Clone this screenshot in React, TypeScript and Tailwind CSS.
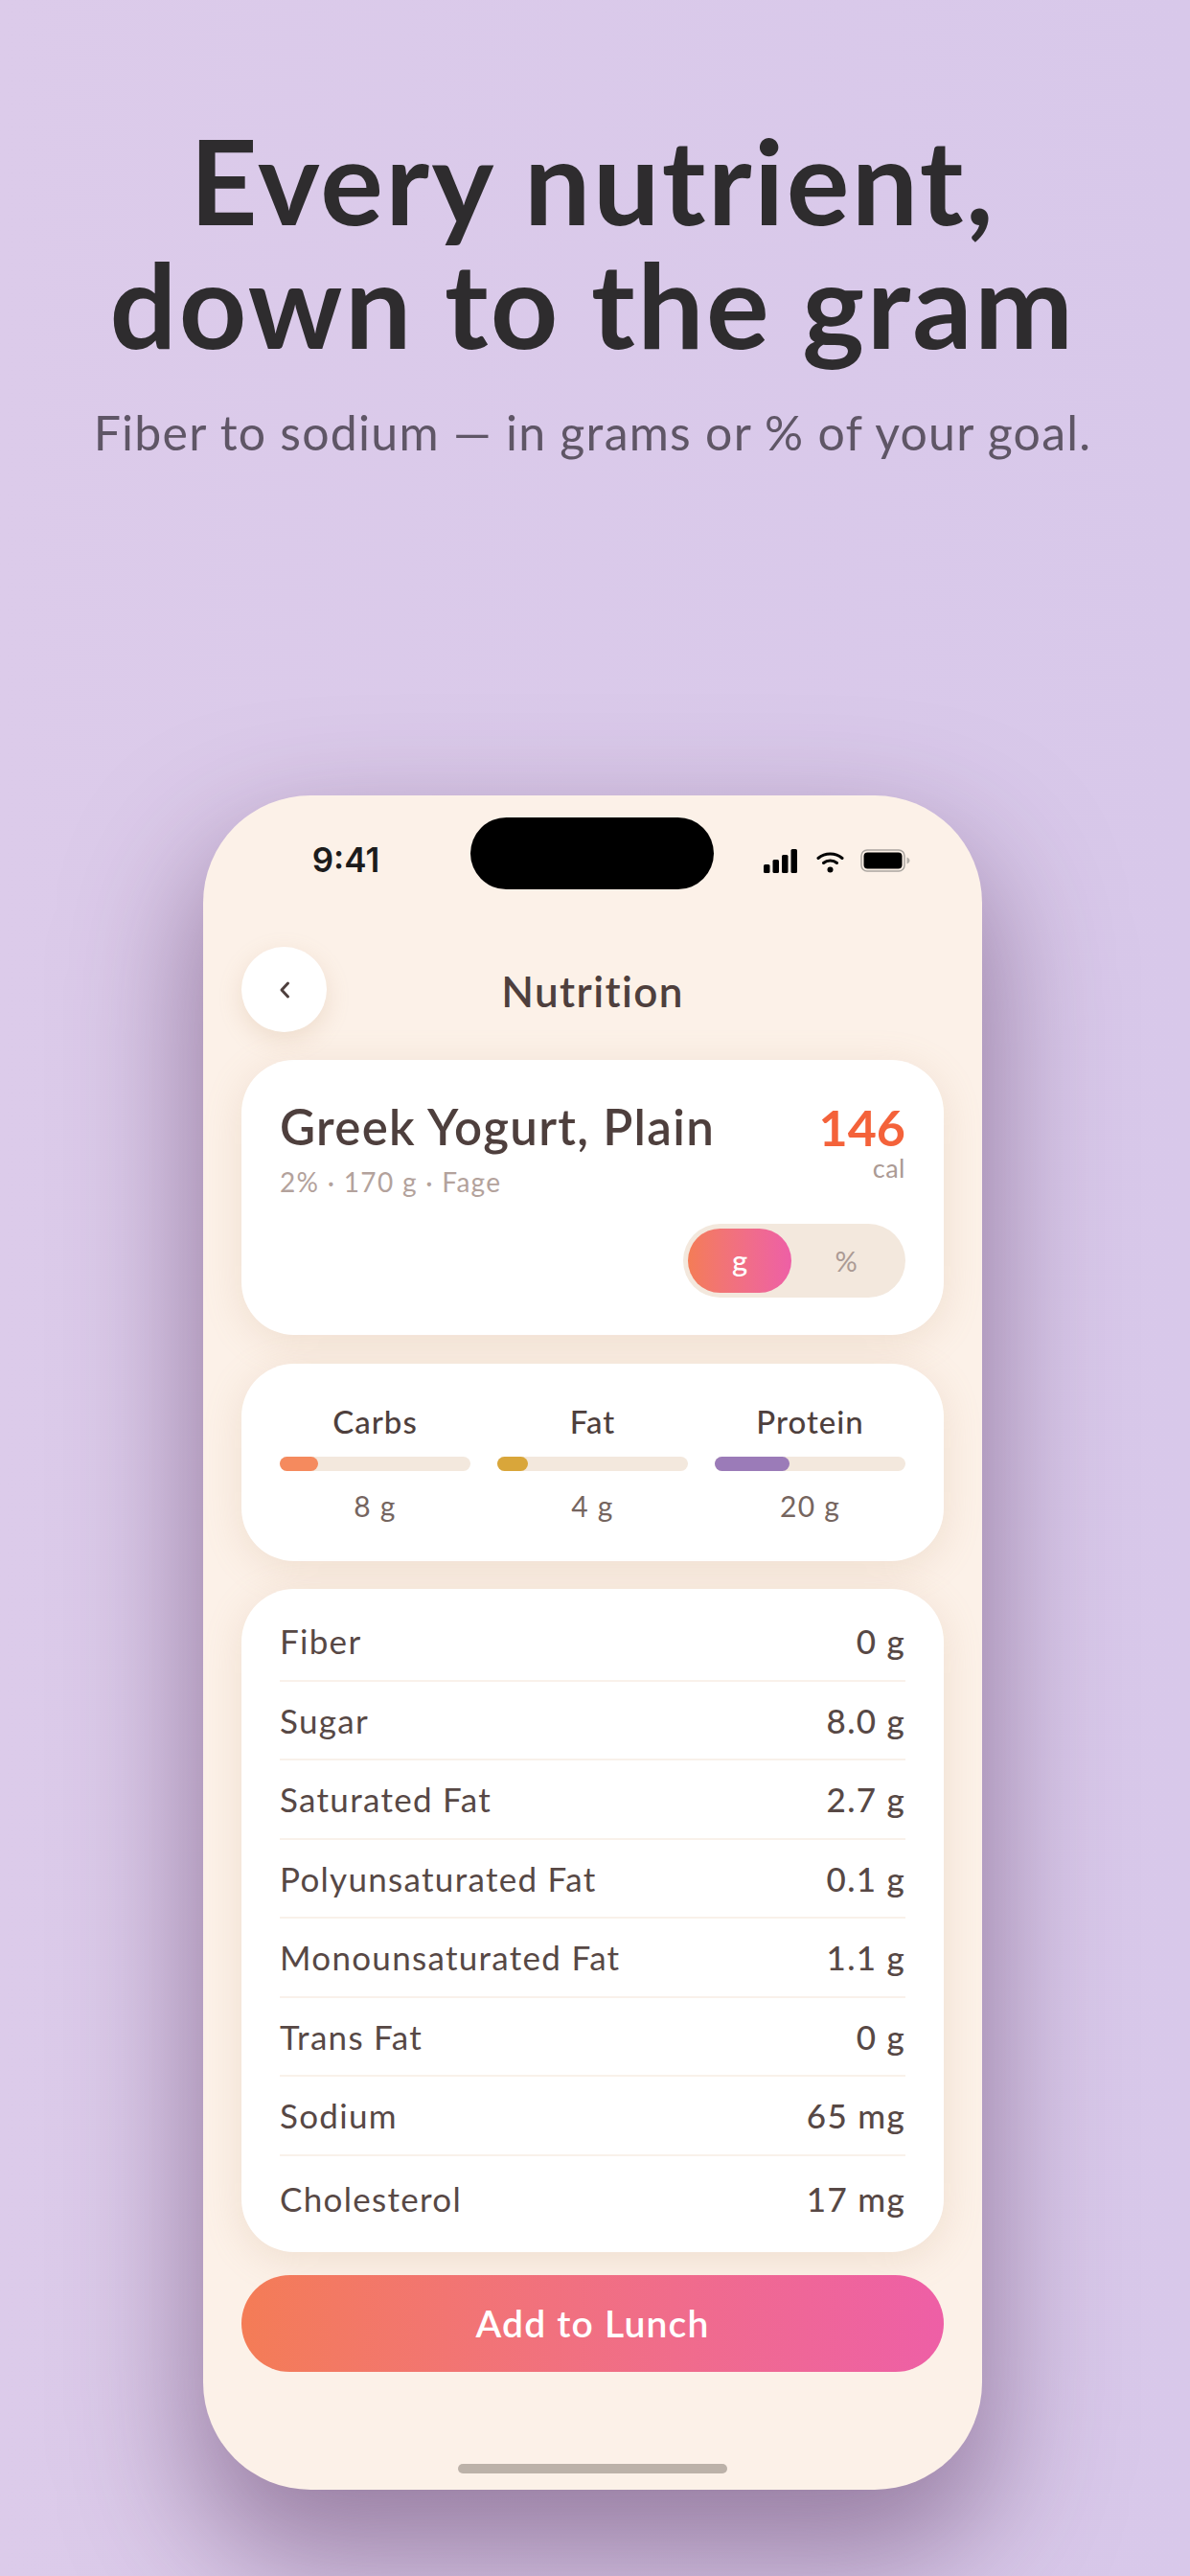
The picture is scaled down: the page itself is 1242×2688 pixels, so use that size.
const macros = [
  { label: 'Carbs', value: '8 g', fill: 'w-[40px] bg-[#f58a5e]' },
  { label: 'Fat', value: '4 g', fill: 'w-[32px] bg-[#d9a63a]' },
  { label: 'Protein', value: '20 g', fill: 'w-[78px] bg-[#9b7bb8]' },
]

const rows = [
  ['Fiber', '0 g'],
  ['Sugar', '8.0 g'],
  ['Saturated Fat', '2.7 g'],
  ['Polyunsaturated Fat', '0.1 g'],
  ['Monounsaturated Fat', '1.1 g'],
  ['Trans Fat', '0 g'],
  ['Sodium', '65 mg'],
  ['Cholesterol', '17 mg'],
]

function StatusIcons() {
  return (
    <div className="flex items-start">
      <svg width="35" height="25" viewBox="0 0 35 25" fill="#000">
        <rect x="0" y="16" width="6.500" height="9" rx="1.500" />
        <rect x="9.500" y="11" width="6.500" height="14" rx="1.500" />
        <rect x="19" y="6" width="6.500" height="19" rx="1.500" />
        <rect x="28.500" y="0" width="6.500" height="25" rx="1.500" />
      </svg>
      <svg className="ml-[20px] mt-[2px]" width="29" height="23" viewBox="0 0 29 23" fill="none" stroke="#000" strokeWidth="3" strokeLinecap="round">
        <path d="M2 7.500C9 1.500 20 1.500 27 7.500" />
        <path d="M7.500 12.500C11.500 9 17.500 9 21.500 12.500" />
        <circle cx="14.500" cy="19.500" r="3" fill="#000" stroke="none" />
      </svg>
      <svg className="ml-[17px]" width="52" height="24" viewBox="0 0 52 24">
        <rect x="1" y="1" width="45" height="22" rx="6" fill="none" stroke="#a9a49f" strokeWidth="1.500" />
        <rect x="3.500" y="3.500" width="40" height="17" rx="4" fill="#000" />
        <path d="M48.500 8.500c2 .8 3 2 3 3.500s-1 2.700-3 3.500z" fill="#b5b0aa" />
      </svg>
    </div>
  )
}

export default function App() {
  return (
    <div className="w-[1242px] h-[2688px] overflow-hidden bg-linear-to-r from-[#dccbea] to-[#d8c8ea] flex flex-col items-center pr-[5px] font-['Lato',sans-serif]">
      <h1 className="mt-[123px] text-center text-[123px] leading-[129px] font-bold text-[#2e2c2e] tracking-[2.400px] whitespace-nowrap">
        Every nutrient,
        <br />
        down to the gram
      </h1>
      <p className="mt-[40px] text-[50px] leading-[60px] text-[#5f5666] tracking-[1.250px] whitespace-nowrap">
        Fiber to sodium — in grams or % of your goal.
      </p>

      <div className="mt-[349px] w-[813px] h-[1768px] shrink-0 rounded-[112px] bg-[#fcf1e8] shadow-[0_60px_130px_10px_rgba(85,50,90,0.5)] flex flex-col px-[40px] text-[#4e3f3d]">
        <div className="h-[158px] pt-[23px] flex">
          <span className="mt-[22px] ml-[59px] w-[100px] text-center font-['Inter',sans-serif] text-[35px] leading-[44px] font-semibold text-[#1c1c1c]">9:41</span>
          <div className="w-[254px] h-[75px] rounded-full bg-black ml-[80px] shrink-0" />
          <div className="mt-[33px] ml-[52px]">
            <StatusIcons />
          </div>
        </div>

        <div className="relative h-[89px] flex items-center justify-center">
          <button className="absolute left-0 top-0 w-[89px] h-[89px] rounded-full bg-white shadow-[0_8px_24px_rgba(190,150,110,0.22)] flex items-center justify-center">
            <svg width="14" height="24" viewBox="0 0 14 24" fill="none" stroke="#4e3f3d" strokeWidth="3" strokeLinecap="round" strokeLinejoin="round">
              <path d="M10.500 5L4 12L10.500 19" />
            </svg>
          </button>
          <span className="text-[44px] leading-[52px] font-semibold tracking-[1.400px] pt-[3px]">Nutrition</span>
        </div>

        <div className="mt-[29px] h-[287px] rounded-[55px] bg-white shadow-[0_8px_40px_rgba(190,150,110,0.2)] px-[40px] pt-[41px]">
          <div className="flex justify-between">
            <div>
              <div className="text-[51px] leading-[58px] font-semibold tracking-[1.300px]">Greek Yogurt, Plain</div>
              <div className="mt-[10px] text-[28px] leading-[36px] text-[#b3a29c] tracking-[1.300px]">2% · 170 g · Fage</div>
            </div>
            <div className="flex flex-col items-end">
              <div className="text-[52px] leading-[58px] font-bold text-[#f4623a]">146</div>
              <div className="text-[27px] leading-[28px] text-[#ab9a94] tracking-[0.500px]">cal</div>
            </div>
          </div>
          <div className="mt-[26px] flex justify-end">
            <div className="w-[232px] h-[77px] rounded-full bg-[#f3e8dd] p-[5px] flex">
              <div className="w-[108px] h-[67px] rounded-full bg-linear-to-r from-[#f47c56] to-[#ee5fa6] flex items-center justify-center text-[31px] text-white font-medium">g</div>
              <div className="flex-1 flex items-center justify-center text-[29px] text-[#ab9a94]">%</div>
            </div>
          </div>
        </div>

        <div className="mt-[30px] h-[206px] rounded-[55px] bg-white shadow-[0_8px_40px_rgba(190,150,110,0.2)] px-[40px] pt-[39px] grid grid-cols-3 gap-x-[28px]">
          {macros.map(m => (
            <div key={m.label} className="flex flex-col items-center">
              <div className="text-[33px] leading-[42px] font-medium tracking-[1px]">{m.label}</div>
              <div className="mt-[16px] w-full h-[15px] rounded-full bg-[#f3e8dd]">
                <div className={`h-full rounded-full ${m.fill}`} />
              </div>
              <div className="mt-[16px] text-[30px] leading-[40px] text-[#75655f] tracking-[1.200px]">{m.value}</div>
            </div>
          ))}
        </div>

        <div className="mt-[29px] h-[692px] rounded-[55px] bg-white shadow-[0_8px_40px_rgba(190,150,110,0.2)] px-[40px] pt-[14px]">
          {rows.map(([name, value], i) => (
            <div
              key={name}
              className={`h-[82.500px] flex items-center justify-between text-[35px] tracking-[1.300px] text-[#574845] ${i < rows.length - 1 ? 'border-b-2 border-[#f9f1ea]' : 'pt-[6px]'}`}
            >
              <span>{name}</span>
              <span className="font-medium">{value}</span>
            </div>
          ))}
        </div>

        <button className="mt-[24px] h-[101px] shrink-0 rounded-full bg-linear-to-r from-[#f47c56] to-[#ee5fa6] text-white text-[39px] font-semibold tracking-[1.200px]">
          Add to Lunch
        </button>

        <div className="mt-[96px] mx-auto w-[281px] h-[10px] rounded-full bg-[#bcb2a9]" />
      </div>
    </div>
  )
}
